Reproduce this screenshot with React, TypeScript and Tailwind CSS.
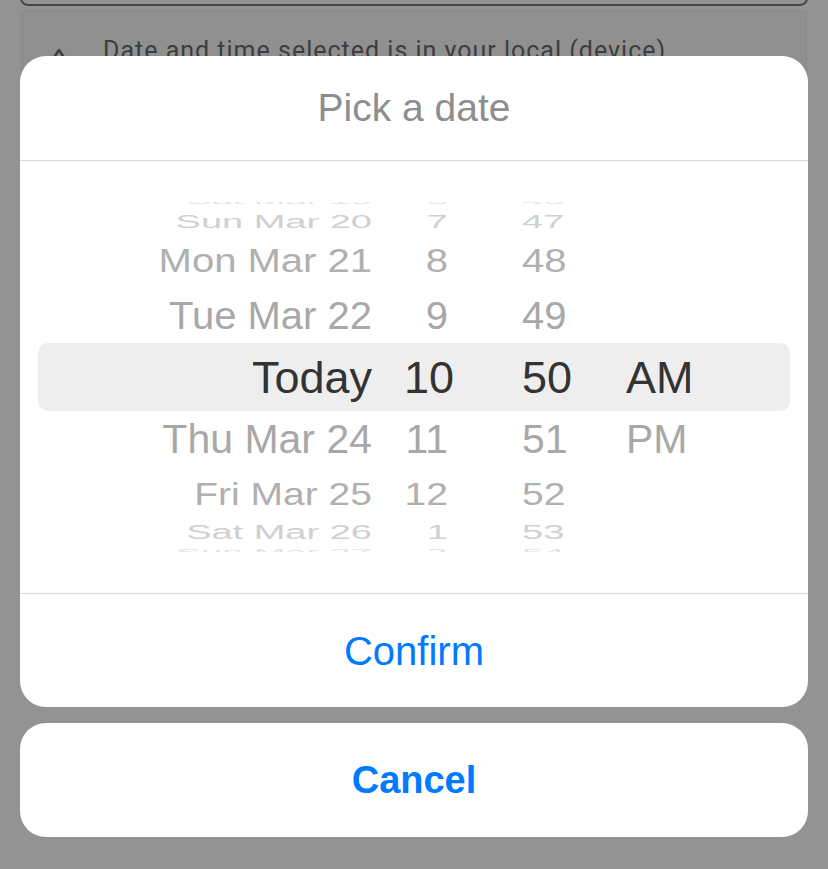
type Row = {
  date: string
  hour: string
  minute: string
  period: string
  height: string
  scale: string
  color: string
  size: string
  selected?: boolean
}

const rows: Row[] = [
  { date: "Sat Mar 19", hour: "6", minute: "46", period: "", height: "h-[10px]", scale: "scale-y-[0.25]", color: "text-[#e3e3e3]", size: "text-[38px]" },
  { date: "Sun Mar 20", hour: "7", minute: "47", period: "", height: "h-[30px]", scale: "scale-y-[0.5]", color: "text-[#d0d0d0]", size: "text-[38px]" },
  { date: "Mon Mar 21", hour: "8", minute: "48", period: "", height: "h-[50px]", scale: "scale-y-[0.82]", color: "text-[#b0b0b0]", size: "text-[40px]" },
  { date: "Tue Mar 22", hour: "9", minute: "49", period: "", height: "h-[57px]", scale: "scale-y-[0.98]", color: "text-[#a8a8a8]", size: "text-[40px]" },
  { date: "Today", hour: "10", minute: "50", period: "AM", height: "h-[68px]", scale: "scale-y-100", color: "text-[#333333]", size: "text-[45px]", selected: true },
  { date: "Thu Mar 24", hour: "11", minute: "51", period: "PM", height: "h-[56px]", scale: "scale-y-[0.98]", color: "text-[#a8a8a8]", size: "text-[41px]" },
  { date: "Fri Mar 25", hour: "12", minute: "52", period: "", height: "h-[54px]", scale: "scale-y-[0.8]", color: "text-[#b0b0b0]", size: "text-[39px]" },
  { date: "Sat Mar 26", hour: "1", minute: "53", period: "", height: "h-[22px]", scale: "scale-y-[0.52]", color: "text-[#d0d0d0]", size: "text-[38px]" },
  { date: "Sun Mar 27", hour: "2", minute: "54", period: "", height: "h-[17px]", scale: "scale-y-[0.25]", color: "text-[#e3e3e3]", size: "text-[38px]" },
]

function WheelRow({ row }: { row: Row }) {
  return (
    <div className={`${row.height} mx-[18px] flex shrink-0 items-center ${row.selected ? "rounded-[10px] bg-[#eeeeef]" : ""}`}>
      <div className={`flex w-full items-center leading-none ${row.scale} ${row.color} ${row.size}`}>
        <div className="w-[334px] text-right whitespace-nowrap">{row.date}</div>
        <div className={`w-[82px] text-right ${row.selected ? "" : "pr-[6px]"}`}>{row.hour}</div>
        <div className="w-[172px] pl-[68px] text-left">{row.minute}</div>
        <div className="text-left">{row.period}</div>
      </div>
    </div>
  )
}

export default function App() {
  return (
    <div className="relative h-[869px] w-full overflow-hidden bg-[#939393] font-['Liberation_Sans',Arial,sans-serif]">
      {/* page behind the sheet */}
      <div className="px-[20px]">
        <div className="-mt-[20px] h-[26px] rounded-b-[8px] border-2 border-[#474747]"></div>
        <div className="mx-[3px] mt-[6px] flex h-[200px] items-start gap-[33px] bg-[#909090] px-[25px] pt-[20px] shadow-[0_0_3px_rgba(0,0,0,0.15)]">
          <svg width="22" height="22" viewBox="0 0 22 22" className="mt-[11px] shrink-0">
            <path d="M1 22 L11 7 L21 22" fill="none" stroke="#3d3d3d" strokeWidth="2.6" strokeLinejoin="round" />
          </svg>
          <p className="font-['Roboto',sans-serif] text-[25px] tracking-[1px] text-[#3d3d3d]">Date and time selected is in your local (device)</p>
        </div>
      </div>

      {/* action sheet */}
      <div className="absolute inset-x-[20px] top-[56px] flex flex-col gap-[16px]">
        <div className="overflow-hidden rounded-[26px] bg-white">
          <div className="flex h-[105px] items-center justify-center border-b border-[#d8d8d8] text-[39px] text-[#8e8e8e]">
            Pick a date
          </div>
          <div className="border-b border-[#d8d8d8] py-[41px]">
            <div className="h-[350px] overflow-hidden">
              <div className="-mt-[6px] flex flex-col">
                {rows.map(r => <WheelRow key={r.date} row={r} />)}
              </div>
            </div>
          </div>
          <button className="flex h-[113px] w-full items-center justify-center text-[40px] text-[#007aff]">
            Confirm
          </button>
        </div>
        <button className="flex h-[114px] w-full items-center justify-center rounded-[26px] bg-white text-[38px] font-bold text-[#007aff]">
          Cancel
        </button>
      </div>
    </div>
  )
}
